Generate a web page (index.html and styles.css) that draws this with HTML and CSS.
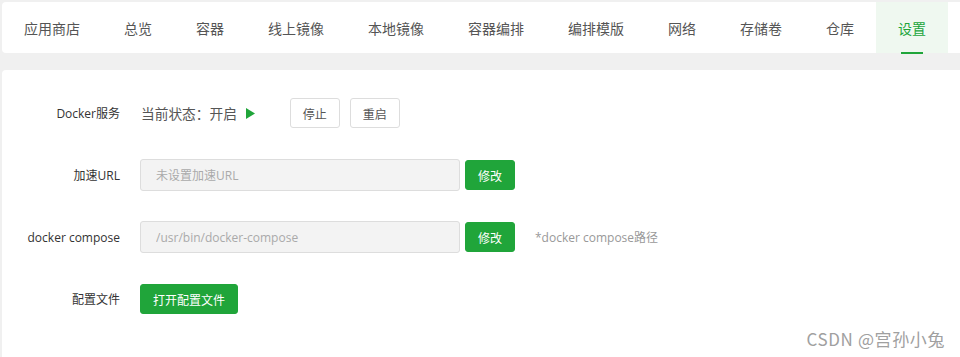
FILE: index.html
```html
<!DOCTYPE html>
<html lang="zh-CN">
<head>
<meta charset="utf-8">
<title>Docker 设置</title>
<link rel="stylesheet" href="styles.css">
</head>
<body>
<nav class="tabs">
  <a class="tab">应用商店</a>
  <a class="tab">总览</a>
  <a class="tab">容器</a>
  <a class="tab">线上镜像</a>
  <a class="tab">本地镜像</a>
  <a class="tab">容器编排</a>
  <a class="tab">编排模版</a>
  <a class="tab">网络</a>
  <a class="tab">存储卷</a>
  <a class="tab">仓库</a>
  <a class="tab active">设置</a>
</nav>
<main class="panel">
  <div class="row">
    <label class="label">Docker服务</label>
    <div class="field">
      <span class="status">当前状态：开启</span>
      <svg class="play" width="9" height="11" viewBox="0 0 9 11"><path d="M0 0L9 5.5L0 11Z" fill="#20a53a"/></svg>
      <button class="btn btn-plain btn-first">停止</button>
      <button class="btn btn-plain">重启</button>
    </div>
  </div>
  <div class="row">
    <label class="label">加速URL</label>
    <div class="field">
      <input class="input" placeholder="未设置加速URL" disabled>
      <button class="btn btn-green">修改</button>
    </div>
  </div>
  <div class="row">
    <label class="label">docker compose</label>
    <div class="field">
      <input class="input" placeholder="/usr/bin/docker-compose" disabled>
      <button class="btn btn-green">修改</button>
      <span class="hint">*docker compose路径</span>
    </div>
  </div>
  <div class="row">
    <label class="label">配置文件</label>
    <div class="field">
      <button class="btn btn-green btn-wide">打开配置文件</button>
    </div>
  </div>
  <div class="watermark">CSDN @宫孙小兔</div>
</main>
</body>
</html>
```
FILE: styles.css
```css
* { box-sizing: border-box; }
html, body { height: 100%; }
body {
  margin: 0;
  background: #f0f0f0;
  font-family: "Open Sans", "Noto Sans CJK SC", sans-serif;
  color: #333;
  display: flex;
  flex-direction: column;
  padding: 2px 0 0 2px;
  overflow: hidden;
}
.tabs {
  display: flex;
  height: 51px;
  background: #fff;
  border-radius: 4px 0 0 4px;
  flex-shrink: 0;
}
.tab {
  position: relative;
  display: flex;
  align-items: center;
  padding: 0 22px;
  font-family: "Noto Sans CJK SC", sans-serif;
  font-size: 14px;
  color: #555;
  cursor: pointer;
}
.tab.active {
  background: #eff8f0;
  color: #20a53a;
}
.tab.active::after {
  content: "";
  position: absolute;
  left: 25px;
  right: 25px;
  bottom: -1px;
  height: 2px;
  background: #20a53a;
}
.panel {
  position: relative;
  flex: 1;
  margin-top: 17px;
  background: #fff;
  border-radius: 4px 0 0 0;
  padding-top: 27px;
}
.row {
  display: flex;
  align-items: center;
  height: 32px;
  margin-bottom: 30px;
}
.label {
  width: 118px;
  text-align: right;
  font-size: 12px;
  color: #333;
  flex-shrink: 0;
}
.field {
  display: flex;
  align-items: center;
  margin-left: 20px;
}
.status {
  font-family: "Noto Sans CJK SC", sans-serif;
  font-size: 13.7px;
  color: #555;
  margin-left: 1px;
}
.play { margin-left: 9px; }
.btn {
  height: 30px;
  border-radius: 3px;
  font-family: "Noto Sans CJK SC", sans-serif;
  font-size: 12px;
  padding: 0;
  cursor: pointer;
}
.btn-plain {
  width: 50px;
  background: #fff;
  border: 1px solid #ddd;
  color: #555;
  margin-left: 10px;
}
.btn-first { margin-left: 35px; }
.btn-green {
  width: 50px;
  background: #20a53a;
  border: 1px solid #20a53a;
  color: #fff;
  margin-left: 5px;
}
.btn-wide {
  width: 98px;
  margin-left: 0;
}
.input {
  width: 320px;
  height: 32px;
  background: #f3f3f3;
  border: 1px solid #ddd;
  border-radius: 3px;
  padding: 0 15px;
  font-family: "Open Sans", "Noto Sans CJK SC", sans-serif;
  font-size: 12px;
}
.input::placeholder { color: #aaa; }
.hint {
  margin-left: 20px;
  font-size: 12px;
  color: #999;
}
.watermark {
  position: absolute;
  right: 15px;
  bottom: 6px;
  font-family: "Noto Sans CJK SC", sans-serif;
  font-size: 17px;
  color: #a0a0a0;
  letter-spacing: 0.6px;
}
```
